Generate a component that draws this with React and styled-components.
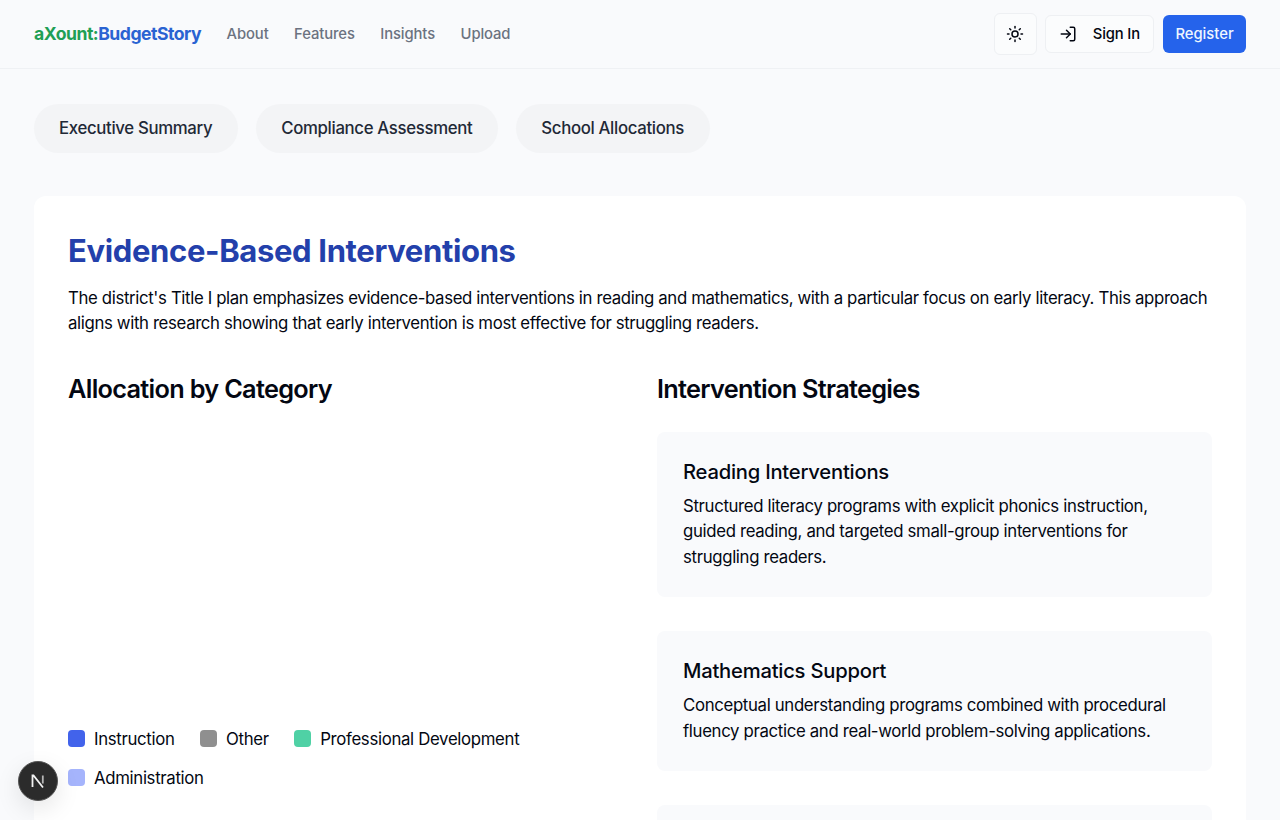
import React from "react";
import styled, { createGlobalStyle } from "styled-components";
import { Sun, LogIn } from "lucide-react";

const Global = createGlobalStyle`
  html, body { margin: 0; padding: 0; height: 820px; overflow: hidden; }
  body { background: #f9fafc; font-family: Inter, "Liberation Sans", sans-serif; color: #030712; }
  * { box-sizing: border-box; }
`;

const Header = styled.header`
  height: 69px;
  padding: 0 34px;
  display: flex;
  align-items: center;
  justify-content: space-between;
  border-bottom: 1px solid #eff1f4;
`;
const Left = styled.div`
  display: flex;
  align-items: center;
  gap: 25.5px;
`;
const Logo = styled.div`
  font-size: 17.6px;
  font-weight: 700;
  letter-spacing: -0.5px;
  padding-bottom: 2px;
  color: #2a63d2;
`;
const LogoGreen = styled.span`
  color: #1f9f55;
`;
const NavLink = styled.a`
  font-size: 14.8px;
  font-weight: 500;
  letter-spacing: -0.1px;
  color: #6b7280;
`;
const Actions = styled.div`
  display: flex;
  align-items: center;
  gap: 9px;
`;
const IconButton = styled.button`
  width: 43px;
  height: 42px;
  margin-right: -0.5px;
  display: flex;
  align-items: center;
  justify-content: center;
  background: #fbfcfd;
  border: 1px solid #eef0f3;
  border-radius: 6px;
  color: #030712;
  padding: 0;
`;
const SignIn = styled.button`
  height: 38px;
  width: 109px;
  padding: 0 13px;
  display: flex;
  align-items: center;
  justify-content: space-between;
  background: #fbfcfd;
  border: 1px solid #eef0f3;
  border-radius: 6px;
  font: 500 14.8px Inter, sans-serif;
  letter-spacing: -0.15px;
  color: #030712;
`;
const Register = styled.button`
  height: 38px;
  width: 83px;
  background: #2563eb;
  border: 0;
  border-radius: 6px;
  font: 500 14.8px Inter, sans-serif;
  color: #eff6ff;
`;
const Main = styled.main`
  padding: 35px 34px 0;
`;
const Tabs = styled.div`
  display: flex;
  gap: 18px;
  margin-bottom: 43px;
`;
const Tab = styled.div`
  height: 49px;
  padding: 0 26px 1px 25px;
  display: flex;
  align-items: center;
  border-radius: 25px;
  background: #f3f4f6;
  font-size: 16.8px;
  font-weight: 500;
  letter-spacing: -0.34px;
  color: #1f2937;
`;
const Card = styled.section`
  background: #fff;
  border-radius: 12px;
  padding: 34px;
  height: 800px;
`;
const Title = styled.h1`
  margin: 0 0 14px;
  font-size: 31px;
  line-height: 42px;
  font-weight: 700;
  letter-spacing: -0.35px;
  color: #2340ab;
`;
const Lead = styled.p`
  margin: 0 0 35px;
  font-size: 16.8px;
  line-height: 25.3px;
  letter-spacing: -0.36px;
`;
const Columns = styled.div`
  display: grid;
  grid-template-columns: 1fr 1fr;
  gap: 34px;
`;
const Heading = styled.h2`
  margin: 0 0 26px;
  font-size: 25.3px;
  line-height: 34px;
  font-weight: 600;
  letter-spacing: -0.7px;
`;
const Chart = styled.div`
  height: 294px;
`;
const Legend = styled.div`
  display: flex;
  flex-wrap: wrap;
  column-gap: 25.5px;
  row-gap: 13px;
  width: 480px;
`;
const LegendItem = styled.div`
  display: flex;
  align-items: center;
  gap: 9px;
  font-size: 16.8px;
  line-height: 26px;
  letter-spacing: -0.33px;
`;
const Swatch = styled.span`
  width: 17px;
  height: 17px;
  border-radius: 4px;
  background: ${(p) => p.$color};
`;
const Strategy = styled.article`
  background: #f9fafc;
  border-radius: 8px;
  padding: 26px 26px 27px;
  margin-bottom: 34px;
  min-height: ${(p) => p.$minHeight || 0}px;
`;
const StrategyTitle = styled.h3`
  margin: 0 0 8px;
  font-size: 20.2px;
  line-height: 28px;
  font-weight: 500;
  letter-spacing: -0.22px;
`;
const StrategyText = styled.p`
  margin: 0;
  font-size: 16.8px;
  line-height: 25.5px;
  letter-spacing: -0.34px;
`;
const DevBadge = styled.div`
  position: fixed;
  left: 18px;
  top: 761px;
  width: 40px;
  height: 40px;
  border-radius: 50%;
  background: #2b2b2b;
  border: 1px solid #555;
  box-shadow: 0 8px 24px rgba(0, 0, 0, 0.1);
  display: flex;
  align-items: center;
  justify-content: center;
`;

const legend = [
  ["Instruction", "#4263eb"],
  ["Other", "#8f8f8f"],
  ["Professional Development", "#4fd1a5"],
  ["Administration", "#a5b4fc"],
];
const strategies = [
  ["Reading Interventions", "Structured literacy programs with explicit phonics instruction, guided reading, and targeted small-group interventions for struggling readers."],
  ["Mathematics Support", "Conceptual understanding programs combined with procedural fluency practice and real-world problem-solving applications."],
];

export default function App() {
  return (
    <>
      <Global />
      <Header>
        <Left>
          <Logo><LogoGreen>aXount:</LogoGreen>BudgetStory</Logo>
          {["About", "Features", "Insights", "Upload"].map((n) => <NavLink key={n}>{n}</NavLink>)}
        </Left>
        <Actions>
          <IconButton><Sun size={18} /></IconButton>
          <SignIn><LogIn size={18} /><span>Sign In</span></SignIn>
          <Register>Register</Register>
        </Actions>
      </Header>
      <Main>
        <Tabs>
          <Tab>Executive Summary</Tab>
          <Tab>Compliance Assessment</Tab>
          <Tab>School Allocations</Tab>
        </Tabs>
        <Card>
          <Title>Evidence-Based Interventions</Title>
          <Lead>The district's Title I plan emphasizes evidence-based interventions in reading and mathematics, with a particular focus on early literacy. This approach aligns with research showing that early intervention is most effective for struggling readers.</Lead>
          <Columns>
            <div>
              <Heading>Allocation by Category</Heading>
              <Chart />
              <Legend>
                {legend.map(([l, c]) => (
                  <LegendItem key={l}><Swatch $color={c} />{l}</LegendItem>
                ))}
              </Legend>
            </div>
            <div>
              <Heading>Intervention Strategies</Heading>
              {strategies.map(([t, d]) => (
                <Strategy key={t}>
                  <StrategyTitle>{t}</StrategyTitle>
                  <StrategyText>{d}</StrategyText>
                </Strategy>
              ))}
              <Strategy $minHeight={140} />
            </div>
          </Columns>
        </Card>
      </Main>
      <DevBadge>
        <svg width="16" height="16" viewBox="0 0 16 16" fill="none">
          <path d="M2.5 14V2.5h1L13 14.5" stroke="#f2f2f2" strokeWidth="1.8" />
          <path d="M12.8 2.5v8" stroke="#b5b5b5" strokeWidth="1.8" />
        </svg>
      </DevBadge>
    </>
  );
}
